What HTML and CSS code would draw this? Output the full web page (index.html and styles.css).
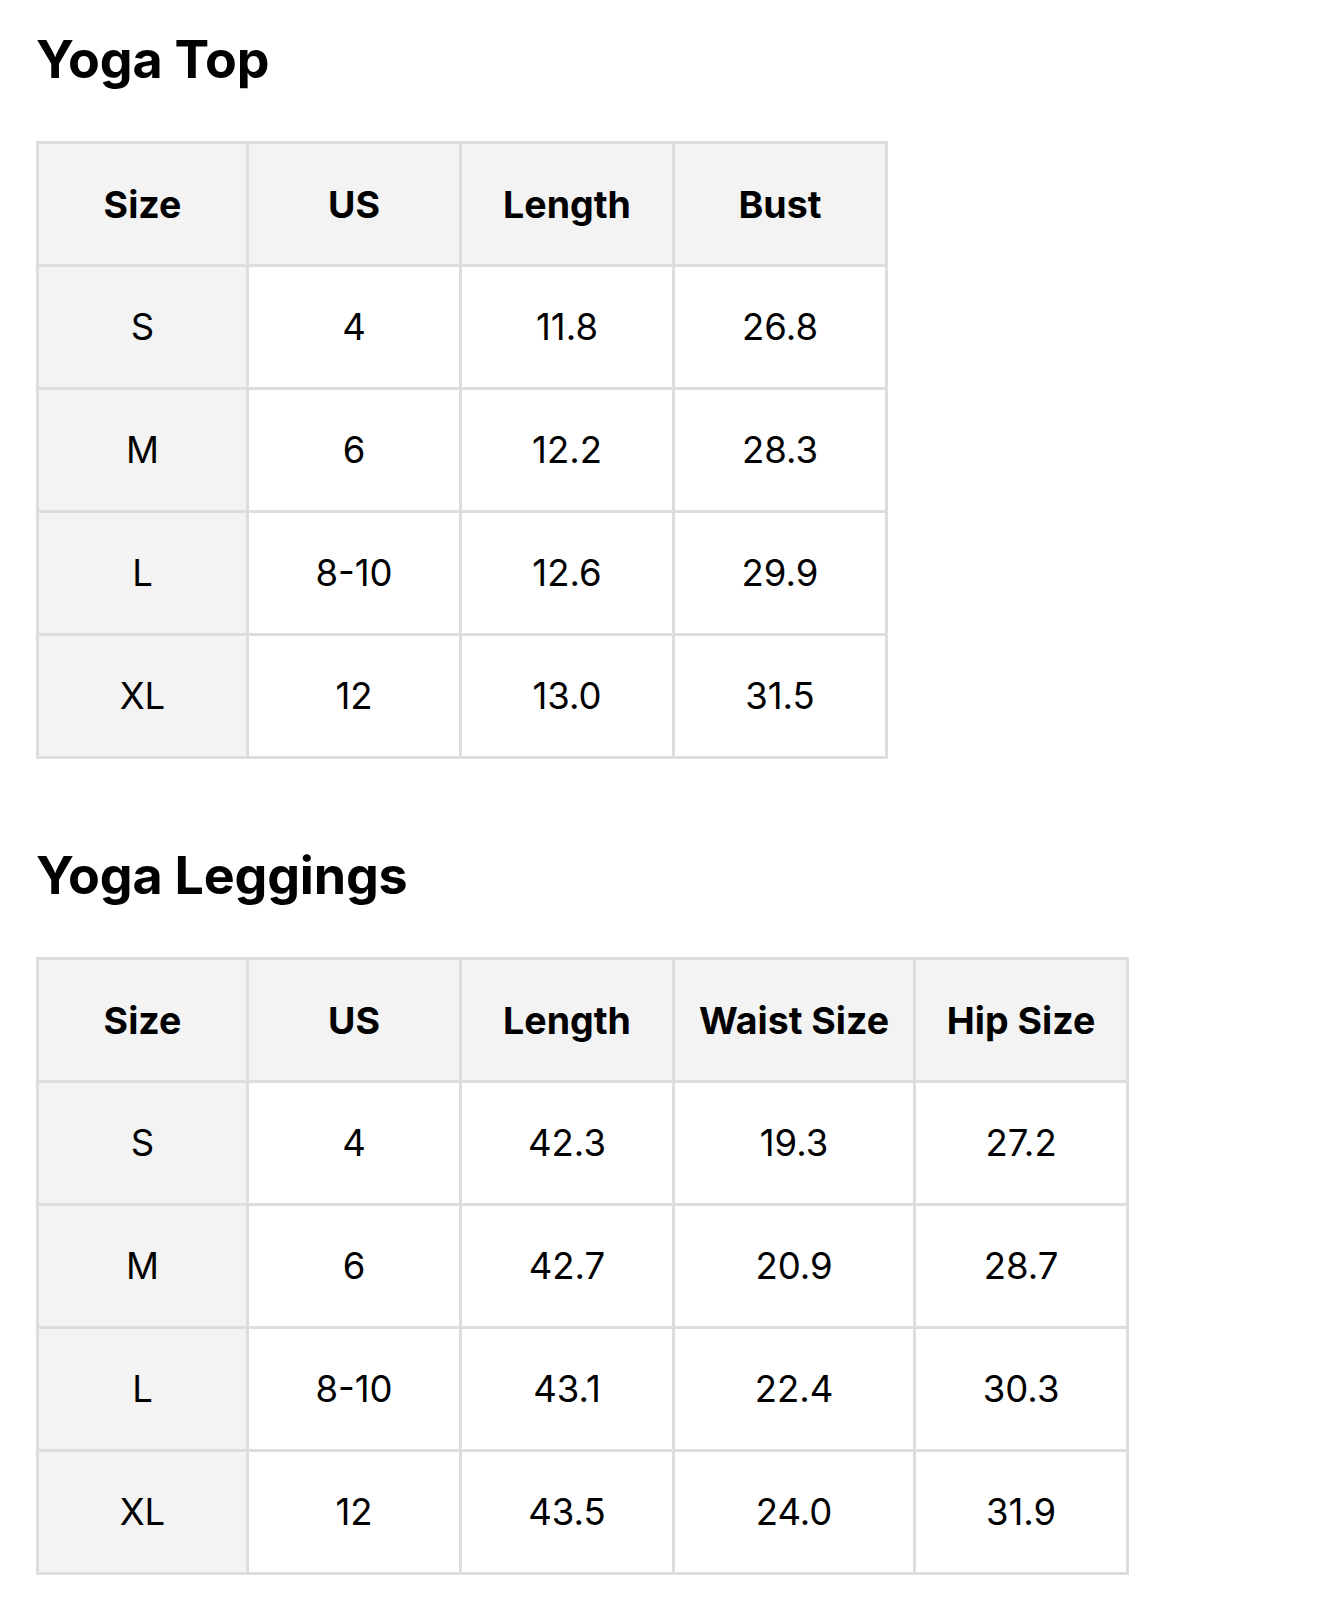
FILE: index.html
```html
<!DOCTYPE html>
<html lang="en">
<head>
<meta charset="utf-8">
<title>Size Guide</title>
<link rel="stylesheet" href="styles.css">
</head>
<body>
<main class="page">
  <section class="chart">
    <h2 class="chart-title">Yoga Top</h2>
    <table class="size-table">
      <thead>
        <tr><th class="size">Size</th><th>US</th><th>Length</th><th>Bust</th></tr>
      </thead>
      <tbody>
        <tr><td class="size">S</td><td>4</td><td>11.8</td><td>26.8</td></tr>
        <tr><td class="size">M</td><td>6</td><td>12.2</td><td>28.3</td></tr>
        <tr><td class="size">L</td><td>8-10</td><td>12.6</td><td>29.9</td></tr>
        <tr><td class="size">XL</td><td>12</td><td>13.0</td><td>31.5</td></tr>
      </tbody>
    </table>
  </section>
  <section class="chart">
    <h2 class="chart-title">Yoga Leggings</h2>
    <table class="size-table">
      <thead>
        <tr><th class="size">Size</th><th>US</th><th>Length</th><th>Waist Size</th><th>Hip Size</th></tr>
      </thead>
      <tbody>
        <tr><td class="size">S</td><td>4</td><td>42.3</td><td>19.3</td><td>27.2</td></tr>
        <tr><td class="size">M</td><td>6</td><td>42.7</td><td>20.9</td><td>28.7</td></tr>
        <tr><td class="size">L</td><td>8-10</td><td>43.1</td><td>22.4</td><td>30.3</td></tr>
        <tr><td class="size">XL</td><td>12</td><td>43.5</td><td>24.0</td><td>31.9</td></tr>
      </tbody>
    </table>
  </section>
</main>
</body>
</html>
```
FILE: styles.css
```css
html, body {
  margin: 0;
  padding: 0;
  background: #ffffff;
}

body {
  font-family: Inter, "Noto Sans", "Liberation Sans", sans-serif;
  color: #000000;
}

.page {
  padding: 28px 36px 40px;
}

.chart + .chart {
  margin-top: 85px;
}

.chart-title {
  margin: 0 0 49px;
  font-size: 52px;
  line-height: 64px;
  font-weight: 700;
  letter-spacing: -0.2px;
}

.size-table {
  border-collapse: collapse;
  border: 3px solid #dddddd;
}

.size-table th,
.size-table td {
  border: 3px solid #dddddd;
  width: 162px;
  height: 120px;
  padding: 0 24px;
  text-align: center;
  vertical-align: middle;
  white-space: nowrap;
}

.size-table th {
  background: #f3f3f3;
  font-size: 37.5px;
  font-weight: 700;
}

.size-table td {
  font-size: 36.5px;
  font-weight: 400;
}

.size-table .size {
  width: 159px;
  background: #f3f3f3;
}
```
